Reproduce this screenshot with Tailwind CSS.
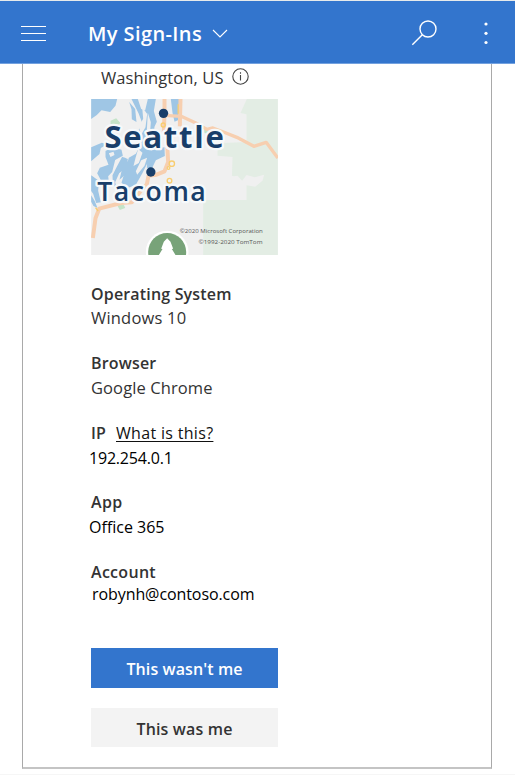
<!DOCTYPE html>
<html lang="en">
<head>
<meta charset="utf-8">
<title>My Sign-Ins</title>
<script src="https://cdn.jsdelivr.net/npm/@tailwindcss/browser@4"></script>
</head>
<body class="w-[515px] h-[775px] overflow-hidden bg-white font-['Open_Sans','Noto_Sans',sans-serif] text-[#333] flex flex-col">
<header class="h-16 shrink-0 flex items-center pt-[2px] bg-[#3375cd] border-t border-t-[#e7eaeb] border-b border-b-[#73a1df] text-white">
  <button class="ml-[21px] w-[25px] h-[15px] flex flex-col justify-between" aria-label="Menu"><span class="block h-px w-full bg-white"></span><span class="block h-px w-full bg-white"></span><span class="block h-px w-full bg-white"></span></button>
  <h1 class="ml-[42px] mt-px w-[114px] whitespace-nowrap text-[20px] leading-[26px] font-semibold tracking-[0.4px]">My Sign-Ins</h1>
  <svg class="ml-[10px] w-4 h-[9px]" viewBox="0 0 16 9" fill="none" stroke="#fff" stroke-width="1.1"><path d="M1 1 8 8 15 1"/></svg>
  <svg class="ml-[183px] w-[26px] h-[26px]" viewBox="0 0 26 26" fill="none" stroke="#fff" stroke-width="1.4"><circle cx="17" cy="9" r="8"/><path d="M11.3 14.7 1.3 24.7"/></svg>
  <svg class="ml-[46px] w-[6px] h-6" viewBox="0 0 6 24" fill="#fff"><circle cx="3" cy="3" r="1.6"/><circle cx="3" cy="12.3" r="1.6"/><circle cx="3" cy="21.5" r="1.6"/></svg>
</header>
<main class="ml-[22px] w-[470px] h-[705px] shrink-0 border border-t-0 border-[#a9a9a9] border-b-2 border-b-[#c4c4c4] pl-[68px] flex flex-col items-start">
  <div class="h-[35px] pl-[10px] flex items-start whitespace-nowrap">
    <p class="mt-[2px] w-[122px] text-[16.5px] leading-6 tracking-[0.1px]">Washington, US</p>
    <svg class="mt-[4px] ml-[9px] w-[17px] h-[17px]" viewBox="0 0 17 17" fill="none" stroke="#444" stroke-width="1.1"><circle cx="8.5" cy="8.5" r="7.7"/><path d="M8.5 7v5.5M8.5 4.2v1.5"/></svg>
  </div>
  <svg class="w-[187px] h-[156px] font-['Open_Sans','Noto_Sans',sans-serif]" viewBox="18 21 560 468">
    <path fill="#f0f0f0" d="M18 21h560v468H18z"/>
    <path fill="#e3ede4" d="M485 21h93v468H354V324h130v-55l-44-5 2-69-45-4v-37l87-4V67l-18-4z"/>
    <path fill="#f0f0f0" d="M427 246l18 7 12-2 14 15 13-17 25 7 28-8-5 18-22 18-25-4-32-8-21-4z"/>
    <path fill="#c4e4c8" d="M76 86l17-7 12 13-5 10-24 1zM356 105l18 5 6 17-22-4zM96 340l20-2 4 10-16 6z"/>
    <g fill="#9fc6e5">
      <path d="M18 21h78l-5 20-16 19-26-5-14 14-17 12z"/>
      <path d="M139 21h73l-6 36 9 32-7 15-9 73 13 18-27 22-13 26-20 35-26 11-17-17 10-33 12-42 21-12 13-24-10-38 17-28-12-31z"/>
      <path d="M132 30l18 21 4 39-14-8-1-30zM257 21h25v62l-14 6-6-27z"/>
      <path d="M61 177l21-11 27 7 4 18-23 13-9 36-12 13 3 24-16 4-20-37 8-17 26-9-9-23zM111 194l17 7-4 25-22 18-12 27 4 16-11-7-1-30 14-28zM18 166l32-14 17 5-20 11-4 18-25 22z"/>
      <path d="M187 195l15-24 36-5 1 26-27 13-14 29-13-7zM18 250l23 16-2 30 8 35-14 2-9-28-6-8zM18 310l11 18 8 20-12-6-7-13zM119 196l15 23-14 29-17 15z"/>
    </g>
    <path fill="#f0f0f0" d="M171 45l15 21-5 40-13 22-7-24 13-24zM159 171l13 11-11 31-16 9 6-24zM188 62l9 29-4 54-9-13zM71 184l14-5 3 10-12 6z"/>
    <path fill="#f0f0f0" d="M158 21l30 0-8 34-12-4zM168 205l18-8-8 24-22 27-4-10z"/>
    <g fill="none" stroke="#f7cfb0" stroke-linejoin="round">
      <path stroke-width="12" d="M238 21v44l-2 55M286 21l-2 82M244 120l5 90-11 28-24 10-24 3-5 26-16 17-29 37-32 2-66 17-11 29-8 59"/>
      <path stroke-width="10" d="M238 70l50 3 44 20 33 19 18-4 32 12 40 16 51 27 37-12 35 47"/>
    </g>
    <g fill="none" stroke="#f8cd70" stroke-width="4"><circle cx="234" cy="99" r="6"/><circle cx="260" cy="215" r="8"/><circle cx="253" cy="266" r="7"/><circle cx="246" cy="134" r="6"/><circle cx="250" cy="228" r="4"/><path d="M279 37v28M31 347l8 10"/></g>
    <g fill="#183e6a"><circle cx="235" cy="64" r="14"/><circle cx="197" cy="240" r="14"/>
      <g stroke="#f6f9fb" stroke-width="14" stroke-linejoin="round">
        <text class="[paint-order:stroke]" x="58" y="167" font-size="93" font-weight="700" textLength="358" lengthAdjust="spacing">Seattle</text>
        <text class="[paint-order:stroke]" x="36" y="327" font-size="80" font-weight="600" textLength="326" lengthAdjust="spacing">Tacoma</text>
      </g></g>
    <circle cx="246" cy="480" r="64" fill="#fff"/><circle cx="246" cy="480" r="57" fill="#78a379"/>
    <path fill="#fff" d="M246 439l10 10 8 21-4 1 11 18h-50l11-18-4-1 8-21z"/>
    <g fill="#555" font-size="18"><text x="284" y="424" textLength="249" lengthAdjust="spacingAndGlyphs">©2020 Microsoft Corporation</text><text x="340" y="455" textLength="192" lengthAdjust="spacingAndGlyphs">©1992-2020 TomTom</text></g>
  </svg>
  <dl class="mt-[27px] text-[16px] leading-6 whitespace-nowrap">
    <dt class="h-6 font-semibold tracking-[0.17px]">Operating System</dt><dd class="h-[45px] text-[16.5px] tracking-[0.2px]">Windows 10</dd>
    <dt class="h-6 font-semibold tracking-[0.17px]">Browser</dt><dd class="h-[46px] pt-px text-[16.5px] tracking-[0.1px]">Google Chrome</dd>
    <dt class="h-6 font-semibold flex"><span class="w-[25px]">IP</span><a class="font-normal text-[#111] tracking-[0.32px] underline underline-offset-2">What is this?</a></dt><dd class="h-[45px] pt-px -ml-[2px] text-black tracking-[-0.2px]">192.254.0.1</dd>
    <dt class="h-6 font-semibold tracking-[0.3px]">App</dt><dd class="h-[46px] pt-px -ml-[2px] text-black">Office 365</dd>
    <dt class="h-[22px] font-semibold tracking-[0.3px]">Account</dt><dd class="h-[25px] pl-px text-black tracking-[-0.08px]">robynh@contoso.com</dd>
  </dl>
  <button class="mt-[41px] w-[187px] h-10 pt-[2px] bg-[#3375cd] text-white text-[16px] tracking-[0.1px] font-semibold">This wasn't me</button>
  <button class="mt-5 w-[187px] h-[39px] pt-[2px] bg-[#f3f3f3] text-[16px] tracking-[0.15px] font-semibold">This was me</button>
</main>
<div class="mt-[5px] h-px shrink-0 bg-[#f6f6f6]"></div>
</body>
</html>
